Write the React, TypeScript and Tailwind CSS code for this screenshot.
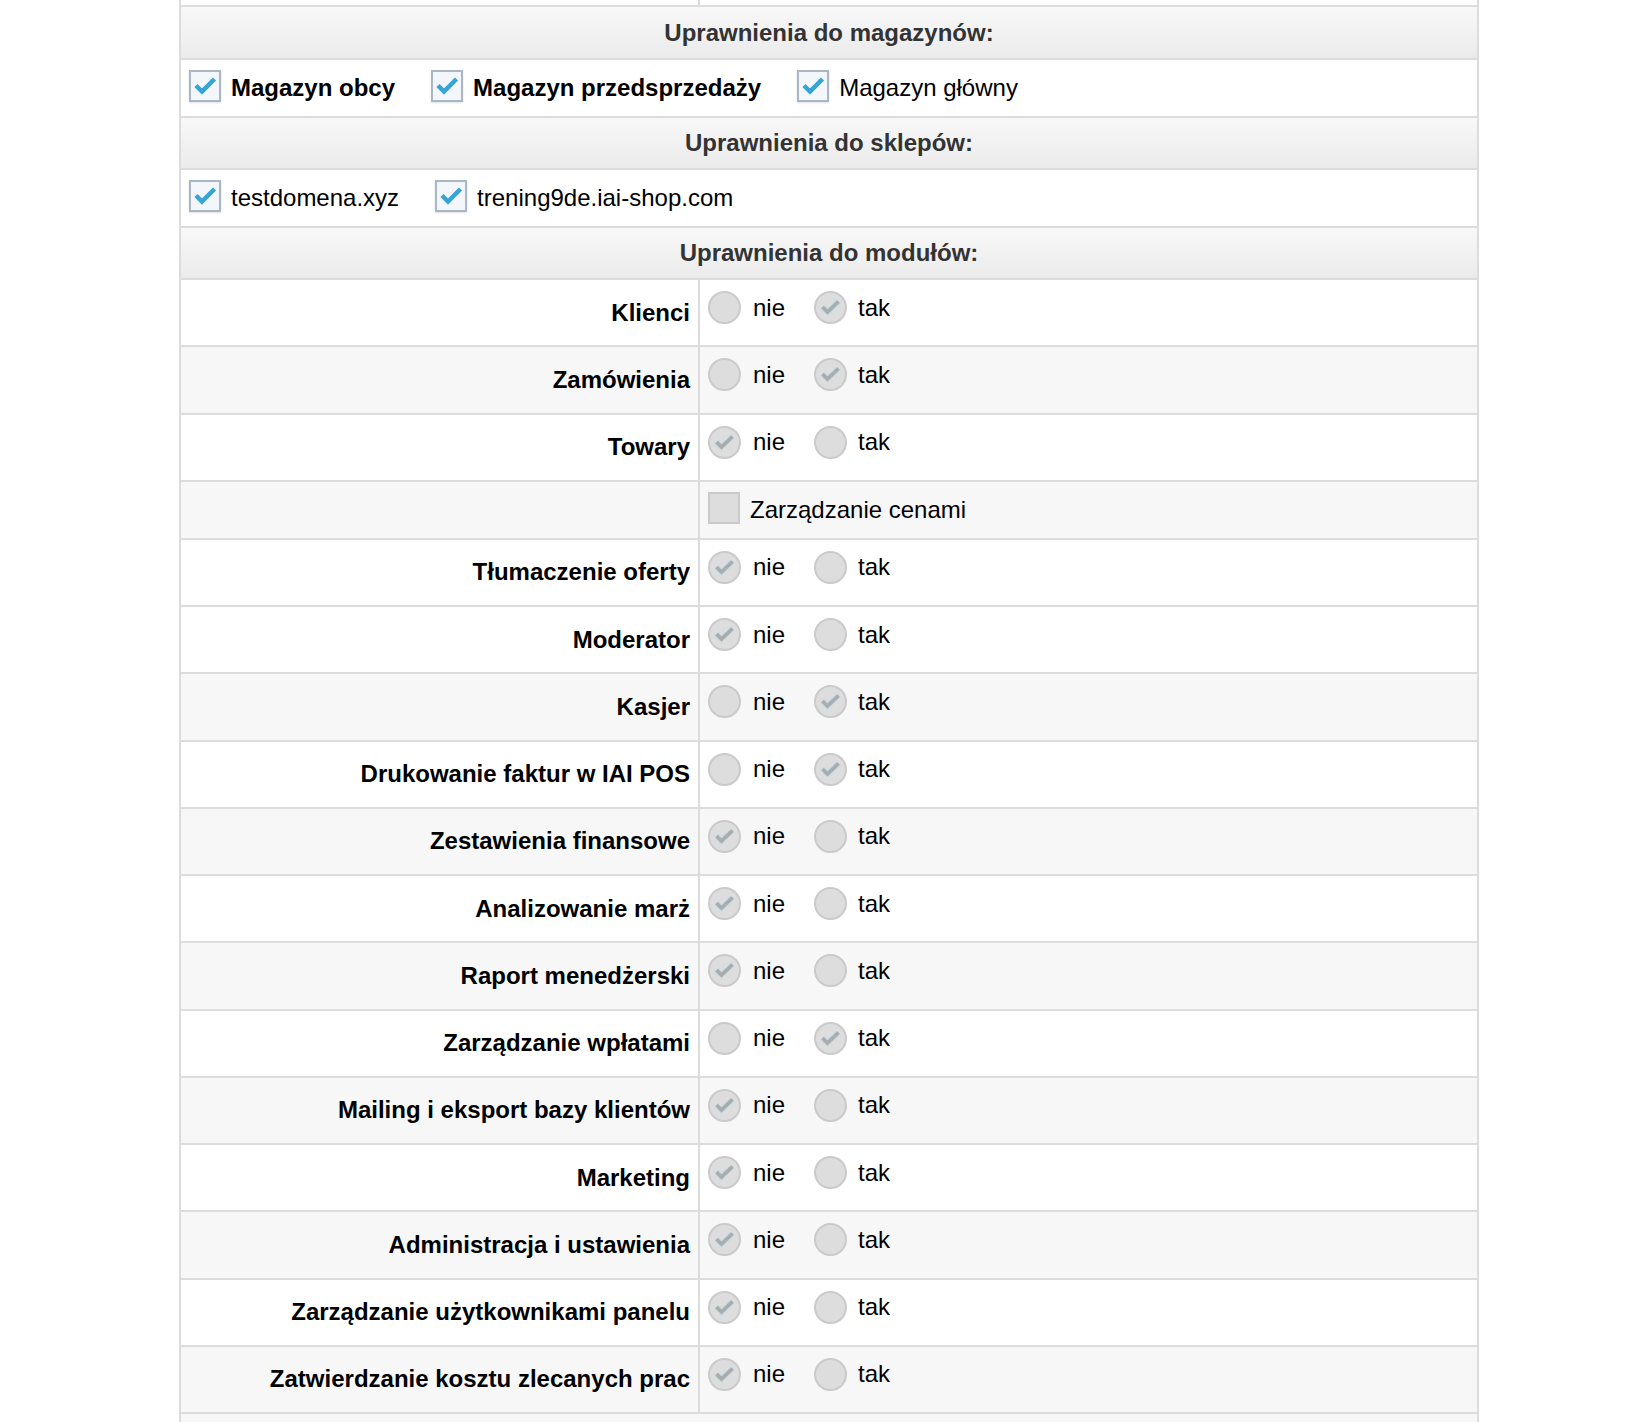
import React from "react";

type Choice = "nie" | "tak";

interface ModuleRow {
  label: string;
  value?: Choice;
  checkbox?: boolean;
  gray?: boolean;
}

const modules: ModuleRow[] = [
  { label: "Klienci", value: "tak" },
  { label: "Zamówienia", value: "tak", gray: true },
  { label: "Towary", value: "nie" },
  { label: "Zarządzanie cenami", checkbox: true, gray: true },
  { label: "Tłumaczenie oferty", value: "nie" },
  { label: "Moderator", value: "nie" },
  { label: "Kasjer", value: "tak", gray: true },
  { label: "Drukowanie faktur w IAI POS", value: "tak" },
  { label: "Zestawienia finansowe", value: "nie", gray: true },
  { label: "Analizowanie marż", value: "nie" },
  { label: "Raport menedżerski", value: "nie", gray: true },
  { label: "Zarządzanie wpłatami", value: "tak" },
  { label: "Mailing i eksport bazy klientów", value: "nie", gray: true },
  { label: "Marketing", value: "nie" },
  { label: "Administracja i ustawienia", value: "nie", gray: true },
  { label: "Zarządzanie użytkownikami panelu", value: "nie" },
  { label: "Zatwierdzanie kosztu zlecanych prac", value: "nie", gray: true },
];

function BlueCheckbox() {
  return (
    <span className="relative mb-[4px] box-border flex h-[32px] w-[32px] shrink-0 border-2 border-[#a9b7c4] bg-[#f3f7fc] shadow-[0_1px_2px_rgba(0,0,0,0.12)]">
      <svg viewBox="0 0 28 28" className="absolute inset-0 h-full w-full">
        <path
          d="M5 13.5 L11 19.5 L23.5 7"
          fill="none"
          stroke="#36a4d5"
          strokeWidth="4.5"
        />
      </svg>
    </span>
  );
}

function Radio({ checked }: { checked: boolean }) {
  return (
    <span className="relative box-border flex h-[33px] w-[33px] shrink-0 rounded-full border-2 border-[#cacaca] bg-[#dddddd]">
      {checked && (
        <svg viewBox="0 0 29 29" className="absolute inset-0 h-full w-full">
          <path
            d="M6.5 14 L11.5 19 L22.5 8.5"
            fill="none"
            stroke="#bcdbe8"
            strokeWidth="5.5"
          />
          <path
            d="M6.5 14 L11.5 19 L22.5 8.5"
            fill="none"
            stroke="#ababab"
            strokeWidth="3.5"
          />
        </svg>
      )}
    </span>
  );
}

function SectionHeader({ title, tall }: { title: string; tall?: boolean }) {
  return (
    <div
      className={
        "flex items-center justify-center border-b-2 border-[#dcdcdc] bg-linear-to-b from-[#f8f8f8] to-[#ebebeb] font-bold text-[#333333] " +
        (tall ? "h-[53px]" : "h-[52px]")
      }
    >
      {title}
    </div>
  );
}

function CheckItem({ label, bold }: { label: string; bold?: boolean }) {
  return (
    <div className="flex items-center">
      <BlueCheckbox />
      <span className={"ml-[10px] mr-[36px] text-black " + (bold ? "font-bold" : "")}>
        {label}
      </span>
    </div>
  );
}

export default function App() {
  return (
    <div className="h-[1422px] overflow-hidden bg-white font-['Liberation_Sans',Arial,sans-serif] text-[24px] leading-none">
      <div className="ml-[179px] w-[1300px] border-x-2 border-[#dcdcdc]">
        {/* Tail of the previous row */}
        <div className="flex h-[7px] border-b-2 border-[#dcdcdc]">
          <div className="w-[519px] border-r-2 border-[#dcdcdc]" />
        </div>

        <SectionHeader title="Uprawnienia do magazynów:" tall />
        <div className="flex h-[58px] items-center border-b-2 border-[#dcdcdc] pl-[8px]">
          <CheckItem label="Magazyn obcy" bold />
          <CheckItem label="Magazyn przedsprzedaży" bold />
          <CheckItem label="Magazyn główny" />
        </div>

        <SectionHeader title="Uprawnienia do sklepów:" />
        <div className="flex h-[58px] items-center border-b-2 border-[#dcdcdc] pl-[8px]">
          <CheckItem label="testdomena.xyz" />
          <CheckItem label="trening9de.iai-shop.com" />
        </div>

        <SectionHeader title="Uprawnienia do modułów:" />

        {modules.map((m) => (
          <div
            key={m.label}
            className={
              "flex border-b-2 border-[#dcdcdc] " +
              (m.gray ? "bg-[#f7f7f7] " : "bg-white ") +
              (m.checkbox ? "h-[58px]" : "h-[67.25px]")
            }
          >
            <div className="flex w-[519px] shrink-0 items-center justify-end border-r-2 border-[#dcdcdc] pr-[8px] font-bold text-black">
              {m.checkbox ? "" : m.label}
            </div>
            {m.checkbox ? (
              <div className="flex items-center pl-[8px]">
                <span className="mb-[4px] box-border h-[32px] w-[32px] border-2 border-[#c9c9c9] bg-[#dddddd]" />
                <span className="ml-[10px] text-black">{m.label}</span>
              </div>
            ) : (
              <div className="flex items-start pl-[8px] pt-[11px]">
                <div className="flex items-center">
                  <Radio checked={m.value === "nie"} />
                  <span className="ml-[12px] mr-[29px] text-black">nie</span>
                  <Radio checked={m.value === "tak"} />
                  <span className="ml-[11px] text-black">tak</span>
                </div>
              </div>
            )}
          </div>
        ))}

        {/* Next section header, cut off by the bottom edge */}
        <div className="h-[52px] bg-linear-to-b from-[#f8f8f8] to-[#ebebeb]" />
      </div>
    </div>
  );
}
